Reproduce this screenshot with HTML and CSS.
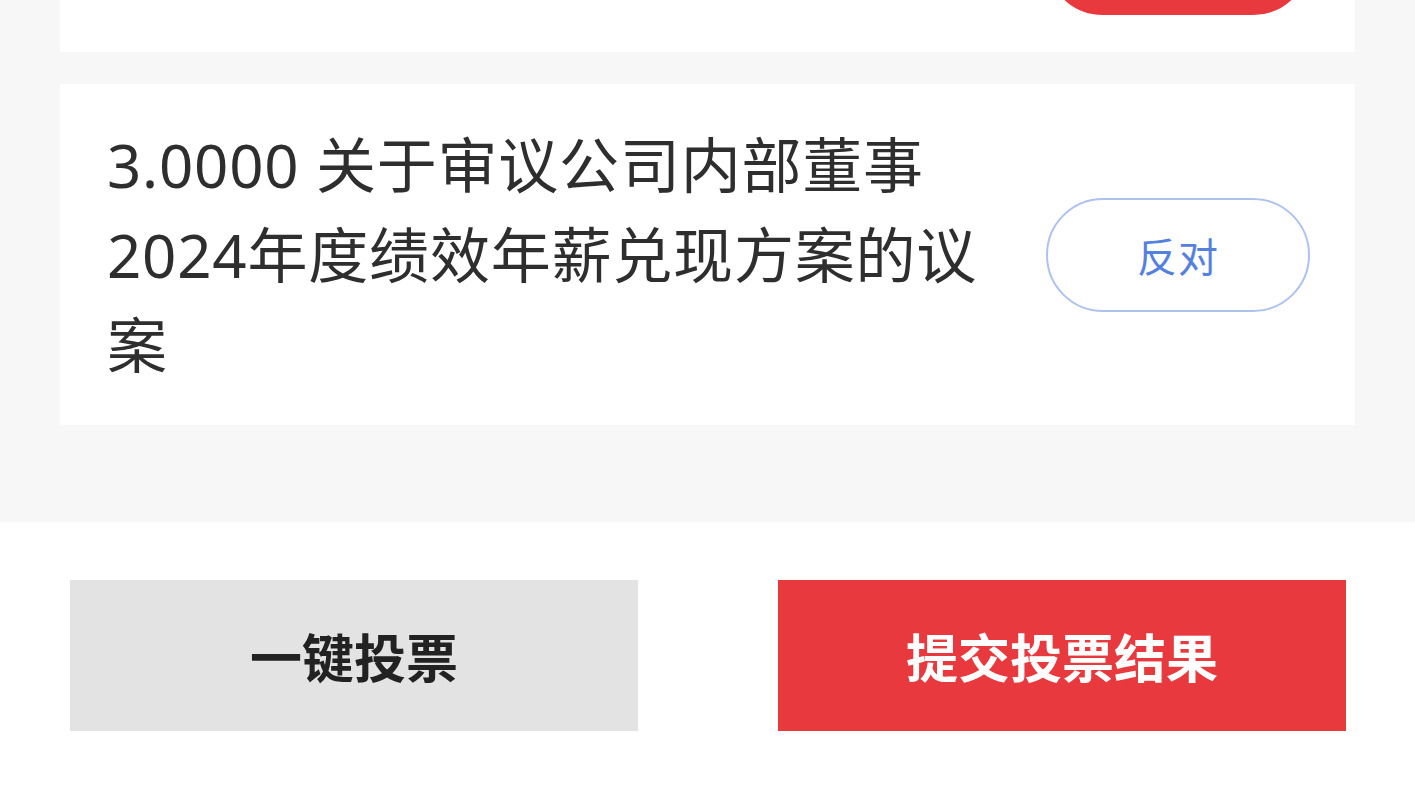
FILE: index.html
```html
<!DOCTYPE html>
<html lang="zh-CN">
<head>
    <meta charset="UTF-8">
    <meta name="viewport" content="width=device-width, initial-scale=1.0">
    <title>投票</title>
    <link rel="stylesheet" href="styles.css">
</head>
<body>
    <div class="vote-list">
        <div class="card card-top">
            <button class="pill pill-on" aria-label="赞成"></button>
        </div>
        <div class="card motion">
            <p class="motion-title">3.0000 关于审议公司内部董事2024年度绩效年薪兑现方案的议案</p>
            <button class="pill">反对</button>
        </div>
    </div>

    <div class="actions">
        <button class="btn btn-gray">一键投票</button>
        <button class="btn btn-red">提交投票结果</button>
    </div>
</body>
</html>
```

FILE: styles.css
```css
body {
    margin: 0;
    font-family: "Noto Sans CJK SC", "Noto Sans", sans-serif;
    background-color: #f7f7f7;
    color: #2e2e2e;
}
.vote-list {
    display: flex;
    flex-direction: column;
    gap: 32px;
    padding: 0 60px 97px;
}
.card {
    background: #fff;
}
.card-top {
    height: 52px;
    display: flex;
    justify-content: flex-end;
    align-items: flex-start;
    padding-right: 45px;
    overflow: hidden;
}
.card-top .pill {
    margin-top: -99px;
}
.motion {
    display: flex;
    align-items: center;
    gap: 40px;
    padding: 36px 45px 35px 47px;
}
.motion-title {
    flex: 1;
    margin: 0;
    font-family: "Noto Sans", "Noto Sans CJK SC", sans-serif;
    font-size: 60px;
    line-height: 90px;
    letter-spacing: 0.8px;
}
.pill {
    flex: none;
    width: 264px;
    height: 114px;
    border: 2px solid #aec2f0;
    border-radius: 57px;
    background: #fff;
    color: #5581de;
    font-family: inherit;
    font-size: 40px;
    letter-spacing: 1px;
}
.pill-on {
    background: #e8393f;
    border-color: #e8393f;
    color: #fff;
}
.actions {
    display: flex;
    gap: 140px;
    height: 265px;
    box-sizing: border-box;
    padding: 58px 69px 0 70px;
    background: #fff;
}
.btn {
    flex: 1;
    height: 151px;
    border: none;
    font-family: inherit;
    font-size: 52px;
    font-weight: 700;
}
.btn-gray {
    background: #e3e3e3;
    color: #222;
}
.btn-red {
    background: #e8393f;
    color: #fff;
}
```
